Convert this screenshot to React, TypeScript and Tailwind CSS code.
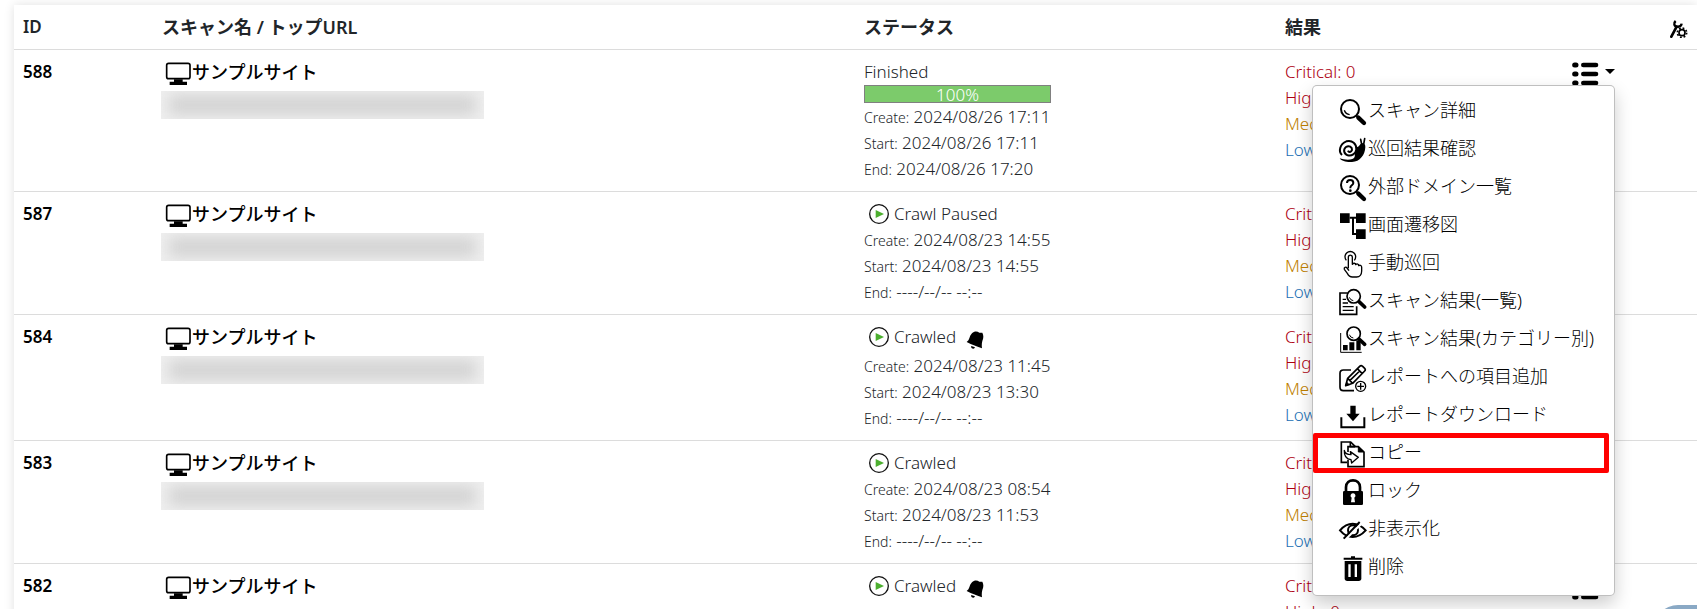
import React from "react";
import { clsx } from "clsx";

type Scan = {
    id: number;
    status: string;
    progress?: number;
    bell?: boolean;
    noUrl?: boolean;
    create: string;
    start: string;
    end: string;
};

const EMPTY_DATE = "----/--/-- --:--";

const scans: Scan[] = [
    { id: 588, status: "Finished", progress: 100, create: "2024/08/26 17:11", start: "2024/08/26 17:11", end: "2024/08/26 17:20" },
    { id: 587, status: "Crawl Paused", create: "2024/08/23 14:55", start: "2024/08/23 14:55", end: EMPTY_DATE },
    { id: 584, status: "Crawled", bell: true, create: "2024/08/23 11:45", start: "2024/08/23 13:30", end: EMPTY_DATE },
    { id: 583, status: "Crawled", create: "2024/08/23 08:54", start: "2024/08/23 11:53", end: EMPTY_DATE },
    { id: 582, status: "Crawled", bell: true, noUrl: true, create: "2024/08/19 11:33", start: "2024/08/19 11:40", end: EMPTY_DATE },
];

const severities = [
    { label: "Critical", color: "text-[#ad0010]" },
    { label: "High", color: "text-[#ad0010]" },
    { label: "Medium", color: "text-[#c08000]" },
    { label: "Low", color: "text-[#2270b5]" },
];

// All menu icons share a 78 unit box
function Icon({ children }: { children: React.ReactNode }) {
    return (
        <svg viewBox="0 0 78 78" className="size-[26px] shrink-0 overflow-visible" fill="none" stroke="#000" aria-hidden="true">
            {children}
        </svg>
    );
}

const SearchIcon = () => (
    <Icon>
        <circle cx="33" cy="30" r="27" strokeWidth="6" />
        <path d="M16 34q4 12 16 13" strokeWidth="4" />
        <path d="M52 50l6 6" strokeWidth="6" />
        <path d="M58 56l17 16" strokeWidth="13" strokeLinecap="round" />
    </Icon>
);

const SnailIcon = () => (
    <Icon>
        <path d="M2 64c10 3 26 6 38 2c16-6 14-34 28-48c6 0 12 4 11 12c-1 24-16 44-40 45c-16 1-31-2-37-11z" fill="#000" stroke="none" />
        <path d="M50 30c8 2 12-4 14-9l8 8l-8 26l-18 14z" fill="#000" stroke="none" />
        <circle cx="28" cy="35" r="24" fill="#fff" stroke="none" />
        <path d="M9 54C-3 43 3 20 22 13c18-5 31 8 30 24c-2 14-14 21-26 18c-12-4-14-18-5-25c9-6 19 0 18 9c-2 7-10 8-12 2" strokeWidth="6" />
        <path d="M68 22L65 7M74 22l3-17" strokeWidth="5" strokeLinecap="round" />
    </Icon>
);

const QuestionSearchIcon = () => (
    <Icon>
        <circle cx="33" cy="30" r="27" strokeWidth="6" />
        <path d="M24 24c0-12 19-12 19 0c0 7-9 7-9 14v2" strokeWidth="6" />
        <circle cx="34" cy="47" r="4" fill="#000" stroke="none" />
        <path d="M52 50l6 6" strokeWidth="6" />
        <path d="M58 56l17 16" strokeWidth="13" strokeLinecap="round" />
    </Icon>
);

const TreeIcon = () => (
    <Icon>
        <path d="M3 1h29v29H3zM51 1h29v29H51zM51 49h29v29H51z" fill="#000" stroke="none" />
        <path d="M32 14h19M42 14v49h9" strokeWidth="6" />
    </Icon>
);

const TapIcon = () => (
    <Icon>
        <path d="M22 28a16 16 0 1 1 24 0" strokeWidth="4" />
        <path
            d="M28 52V19c0-9 12-9 12 0v21c3-5 10-4 10 1c4-4 9-2 9 3c5-3 9 0 9 5v11c0 10-6 18-15 18H40c-8 0-12-5-15-11L16 55c-2-6 5-9 8-4l6 8"
            strokeWidth="4"
            strokeLinejoin="round"
        />
    </Icon>
);

const ReportSearchIcon = () => (
    <Icon>
        <path d="M26 12H3v64h50V52" strokeWidth="5" />
        <path d="M11 31h10M11 42h16M11 53h33M11 64h33" strokeWidth="4" />
        <circle cx="44" cy="22" r="20" strokeWidth="5" fill="#fff" />
        <path d="M31 25q3 9 12 10" strokeWidth="3" />
        <path d="M60 38l17 16" strokeWidth="11" strokeLinecap="round" />
    </Icon>
);

const ChartSearchIcon = () => (
    <Icon>
        <path d="M5 18v58h63" strokeWidth="3" />
        <path d="M12 54h14v16H12zM31 46h15v24H31zM52 40h13v30H52z" fill="#000" stroke="none" />
        <circle cx="44" cy="20" r="20" strokeWidth="5" fill="#fff" />
        <path d="M31 23q3 9 12 10" strokeWidth="3" />
        <path d="M60 36l17 16" strokeWidth="11" strokeLinecap="round" />
    </Icon>
);

const EditAddIcon = () => (
    <Icon>
        <path d="M36 15H13Q3 15 3 25v42q0 10 10 10h32" strokeWidth="5" />
        <path d="M20 62l6-22L62 4q4-4 9 0l6 6q4 4 0 8L41 55zM55 11l14 14M26 40l15 15M33 46l29-28" strokeWidth="5" strokeLinejoin="round" />
        <path d="M20 62l3-11l8 8z" fill="#000" strokeWidth="2" />
        <circle cx="65" cy="64" r="15" strokeWidth="4" fill="#fff" />
        <path d="M65 54v20M55 64h20" strokeWidth="4" />
    </Icon>
);

const DownloadIcon = () => (
    <Icon>
        <path d="M34 8h16v24h12L42 55L22 32h12z" fill="#000" stroke="none" />
        <path d="M7 43v30h69V43" strokeWidth="6" />
    </Icon>
);

const CopyIcon = () => (
    <Icon>
        <path d="M24 64H7V3h28l14 14" strokeWidth="5" />
        <path d="M34 3v14h14" strokeWidth="5" />
        <path d="M27 33V17h31l17 16v44H27V57" strokeWidth="5" />
        <path d="M58 17v16h17z" fill="#000" strokeWidth="3" />
        <path d="M16 28c2 9 8 13 20 13l-2-9l24 17l-20 17l-2-10C24 55 15 46 16 28z" fill="#fff" strokeWidth="4" strokeLinejoin="round" />
    </Icon>
);

const LockIcon = () => (
    <Icon>
        <path d="M21 40V25c0-28 42-28 42 0v15" strokeWidth="8" />
        <rect x="12" y="36" width="60" height="42" rx="4" fill="#000" stroke="none" />
        <path d="M42 43a7 7 0 0 1 4 13l2 14H36l2-14a7 7 0 0 1 4-13z" fill="#fff" stroke="none" />
    </Icon>
);

const HiddenIcon = () => (
    <Icon>
        <path d="M3 40Q20 20 41 20T80 40Q62 60 41 60T3 40z" strokeWidth="6" />
        <circle cx="42" cy="40" r="15" strokeWidth="6" />
        <path d="M20 66L68 19" stroke="#fff" strokeWidth="7" />
        <path d="M14 65L62 15" strokeWidth="6" />
    </Icon>
);

const TrashIcon = () => (
    <Icon>
        <path d="M36 4h12v4h22v6H14V8h22z" fill="#000" stroke="none" />
        <path d="M17 18h50v52q0 8-8 8H25q-8 0-8-8z" fill="#000" stroke="none" />
        <path d="M28 28h7v38h-7zM47 28h7v38h-7z" fill="#fff" stroke="none" />
    </Icon>
);

const MonitorIcon = () => (
    <Icon>
        <rect x="5" y="7" width="70" height="46" rx="6" strokeWidth="5" />
        <path d="M27 55h26v7h13v10H14V62h13z" fill="#000" stroke="none" />
    </Icon>
);

const ListIcon = () => (
    <Icon>
        <path d="M8 12h4M8 39h4M8 66h4" strokeWidth="15" strokeLinecap="round" />
        <path d="M34 12h38M34 39h38M34 66h38" strokeWidth="14" strokeLinecap="round" />
    </Icon>
);

const PlayIcon = () => (
    <svg viewBox="0 0 60 60" className="size-5" fill="none" aria-hidden="true">
        <circle cx="30" cy="30" r="28" stroke="#111" strokeWidth="4" />
        <path d="M20 18l25 12l-25 12z" fill="#4caf2f" />
    </svg>
);

const BellIcon = () => (
    <svg viewBox="0 0 54 54" className="mt-1 size-[18px]" aria-hidden="true">
        <path d="M2 33c10-6 7-17 16-26c7-7 16-6 22-2l9 0c4 8 4 17 0 25c-2 8-2 13-1 22c-14-5-30-11-46-19zM16 45a5 5 0 0 0 11 4z" />
    </svg>
);

const ToolsIcon = () => (
    <svg viewBox="0 0 54 54" className="size-[18px]" fill="none" stroke="#000" aria-hidden="true">
        <path d="M4 50L20 20" strokeWidth="8" strokeLinecap="round" />
        <path d="M17 3c-7 6-5 17 4 17c7 1 13-2 14-9" strokeWidth="7" />
        <circle cx="36" cy="38" r="9" strokeWidth="5" />
        <circle cx="36" cy="38" r="14" strokeWidth="5" strokeDasharray="5.5 5.5" />
    </svg>
);

const menuItems = [
    { label: "スキャン詳細", icon: SearchIcon },
    { label: "巡回結果確認", icon: SnailIcon },
    { label: "外部ドメイン一覧", icon: QuestionSearchIcon },
    { label: "画面遷移図", icon: TreeIcon },
    { label: "手動巡回", icon: TapIcon },
    { label: "スキャン結果(一覧)", icon: ReportSearchIcon },
    { label: "スキャン結果(カテゴリー別)", icon: ChartSearchIcon },
    { label: "レポートへの項目追加", icon: EditAddIcon },
    { label: "レポートダウンロード", icon: DownloadIcon },
    { label: "コピー", icon: CopyIcon, marked: true },
    { label: "ロック", icon: LockIcon },
    { label: "非表示化", icon: HiddenIcon },
    { label: "削除", icon: TrashIcon },
];

function ActionMenu() {
    return (
        <ul className="absolute right-0 top-full z-10 w-[303px] rounded-[5px] border border-black/25 bg-white pb-2 pt-[7px] shadow-[0_8px_18px_rgba(0,0,0,0.2)]">
            {menuItems.map(({ label, icon: ItemIcon, marked }) => (
                <li key={label} className="relative">
                    <a href="#" className="flex h-[38px] items-center gap-[3px] pl-[26px] text-[18px] font-light text-black">
                        <ItemIcon />
                        <span className="whitespace-nowrap pb-1">{label}</span>
                    </a>
                    {marked && <span className="pointer-events-none absolute -top-[2px] left-0 right-[5px] h-10 rounded-[2px] border-[5px] border-[#ff0000]" />}
                </li>
            ))}
        </ul>
    );
}

function DateLine({ label, value }: { label: string; value: string }) {
    return (
        <div className="h-[26px] whitespace-nowrap">
            <span className="text-[14px]">{label}:</span> {value}
        </div>
    );
}

function ScanRow({ scan, open }: { scan: Scan; open: boolean }) {
    return (
        <tr className="border-t border-[#dcdcdc] align-top">
            <td className="p-[9px] font-semibold text-black">{scan.id}</td>
            <td className="p-[9px]">
                <div className="flex h-[26px] items-center gap-px pl-[3px] text-[18px] font-medium text-black">
                    <div className="pt-1"><MonitorIcon /></div>
                    サンプルサイト
                </div>
                {!scan.noUrl && (
                    <div className="-ml-px mt-[6px] h-7 w-[323px] overflow-hidden bg-[#efefef] px-2 py-1">
                        <div className="h-full bg-[#d4d4d4] blur-[7px]" />
                    </div>
                )}
            </td>
            <td className="p-[9px]">
                {scan.progress !== undefined ? (
                    <>
                        <div className="h-[26px]">{scan.status}</div>
                        <div className="h-[19px]">
                            <div className="h-[18px] w-[187px] border border-[#808080] bg-[#e9ecef]">
                                <div className="flex h-full items-center justify-center bg-[#7ccb6b] pt-[3px] text-white" style={{ width: `${scan.progress}%` }}>
                                    {scan.progress}%
                                </div>
                            </div>
                        </div>
                    </>
                ) : (
                    <div className={clsx("flex items-start gap-[5px] pl-[5px]", scan.bell ? "h-[29px]" : "h-[26px]")}>
                        <div className="pt-[3px]"><PlayIcon /></div>
                        {scan.status}
                        {scan.bell && <div className="pl-[5px] pt-[3px]"><BellIcon /></div>}
                    </div>
                )}
                <DateLine label="Create" value={scan.create} />
                <DateLine label="Start" value={scan.start} />
                <DateLine label="End" value={scan.end} />
            </td>
            <td className="p-[9px]">
                {severities.map((s) => (
                    <div key={s.label} className={clsx("h-[26px]", s.color)}>{s.label}: 0</div>
                ))}
            </td>
            <td className="p-[9px]">
                <div className="relative w-[43px]">
                    <button aria-label="メニュー" className="flex h-[26px] w-full items-center justify-between">
                        <span className="pt-1"><ListIcon /></span>
                        <span className="border-x-[5px] border-t-[5px] border-x-transparent border-t-black" />
                    </button>
                    {open && <ActionMenu />}
                </div>
            </td>
            <td />
        </tr>
    );
}

export default function App() {
    return (
        <div className="h-screen overflow-hidden bg-white pl-[14px] pt-[5px] font-['Noto_Sans','Noto_Sans_CJK_JP',sans-serif] text-[17px] leading-[26px] text-[#212529]">
            <div className="min-h-full shadow-[0_0_10px_rgba(0,0,0,0.12)]">
                <table className="w-full table-fixed border-collapse bg-white font-light">
                    <colgroup>
                        <col className="w-[139px]" />
                        <col />
                        <col className="w-[421px]" />
                        <col className="w-[287px]" />
                        <col className="w-[98px]" />
                        <col className="w-9" />
                    </colgroup>
                    <thead>
                        <tr className="h-[44px] text-left text-[18px]">
                            <th className="px-[9px] text-[17px] font-semibold">ID</th>
                            <th className="px-[9px] font-semibold">スキャン名 / トップURL</th>
                            <th className="px-[9px] font-semibold">ステータス</th>
                            <th className="px-[9px] font-semibold">結果</th>
                            <th />
                            <th className="px-[9px]">
                                <button aria-label="設定" className="block pt-1"><ToolsIcon /></button>
                            </th>
                        </tr>
                    </thead>
                    <tbody>
                        {scans.map((scan, i) => (
                            <ScanRow key={scan.id} scan={scan} open={i === 0} />
                        ))}
                    </tbody>
                </table>
            </div>
            <button aria-label="ページトップへ" className="fixed -bottom-[46px] -right-[26px] h-[50px] w-[70px] rounded-full bg-[#8aa9c5]" />
        </div>
    );
}
